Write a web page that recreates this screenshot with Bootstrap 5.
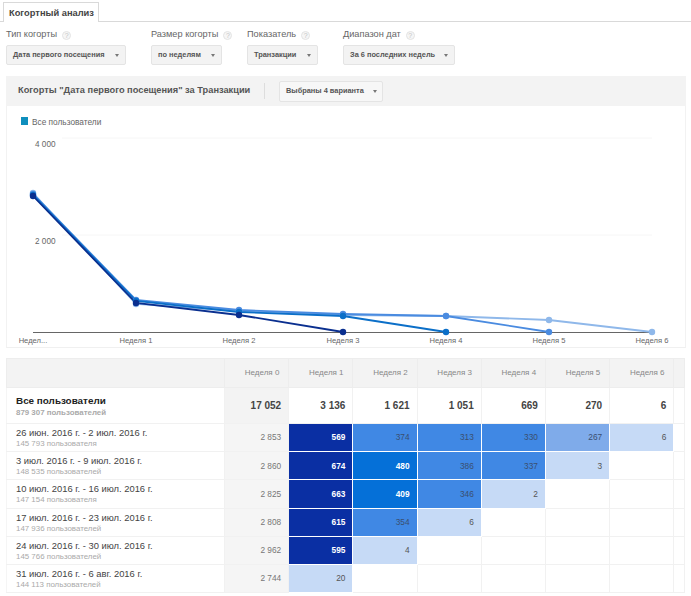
<!DOCTYPE html>
<html lang="ru">
<head>
<meta charset="utf-8">
<title>Когортный анализ</title>
<link rel="stylesheet" href="https://cdn.jsdelivr.net/npm/bootstrap@5.3.0/dist/css/bootstrap.min.css">
<style>
html,body{background:#fff;}
body{font-family:"Liberation Sans",Arial,sans-serif;color:#333;overflow:hidden;width:691px;height:596px;}
.tabbar{padding:2px 0 0 3px;height:22px;border-bottom:1px solid #d9d9d9;}
.tabitem{display:block;height:20px;width:96px;padding:3px 0 0 5px;border:1px solid #d9d9d9;border-bottom:0;background:#fff;font-size:9.3px;font-weight:700;color:#444;margin-bottom:-1px;line-height:14px;white-space:nowrap;}
.filters{padding:6px 0 0 6px;height:54px;}
.fgroup{width:145px;}
.fgroup.fg2,.fgroup.fg3{width:96px;}
.flabel{font-size:9.2px;color:#666;line-height:12px;height:17px;white-space:nowrap;}
.qmark{display:inline-block;width:9px;height:9px;border:1px solid #e4e4e4;border-radius:50%;background:#f6f6f6;color:#c4c4c4;font-size:7px;line-height:8px;text-align:center;margin-left:5px;vertical-align:-1px;}
.gbtn{display:flex;align-items:center;justify-content:space-between;height:20px;padding:0 6px;background:#f3f3f3;border:1px solid #e4e4e4;border-radius:2px;font-size:7.4px;font-weight:700;color:#555;white-space:nowrap;--bs-btn-hover-bg:#f3f3f3;}
.gbtn::after{border-top:3px solid #777;border-right:2.5px solid transparent;border-left:2.5px solid transparent;border-bottom:0;margin-left:0;}
.w120{width:120px;}.w71{width:71px;}.w112{width:112px;}
.panelhead{margin:0 5px 0 6px;height:30px;background:#f3f3f3;padding-left:12px;}
.ptitle{font-size:9.25px;font-weight:700;color:#555;width:246px;white-space:nowrap;}
.psep{width:1px;height:16px;background:#ddd;margin-right:14px;}
.gbtn.w104{width:104px;background:#f7f7f7;height:21px;padding:0 5px 0 6px;}
.chartbox{margin:0 5px 0 6px;height:242px;border-left:1px solid #f2f2f2;border-right:1px solid #f2f2f2;border-bottom:1px solid #f0f0f0;}
.chartbox svg{display:block;}
.ctext{font-family:"Liberation Sans",Arial,sans-serif;font-size:7.6px;fill:#666;}
.cohort{table-layout:fixed;border-collapse:collapse;width:678px;margin:10px 0 0 6px;--bs-table-bg:transparent;}
.cohort td,.cohort th{padding:0 5px 0 0;text-align:right;vertical-align:middle;border:1px solid #f1f1f1;font-weight:400;line-height:1;}
.cohort thead th{height:29px;background:#f3f3f3;color:#888;font-size:8px;text-align:center;padding:0 0 0 11px;border-color:#ededed;white-space:nowrap;}
.cohort td.rname{text-align:left;padding:0 0 0 9px;border-left-color:#f5f5f5;}
.rmain{font-size:9.4px;color:#444;line-height:11px;white-space:nowrap;}
.rsub{font-size:7.9px;color:#aaa;line-height:9px;white-space:nowrap;margin-top:1px;}
.totrow td{height:36px;font-size:10px;font-weight:700;color:#444;padding-right:7px;}
.totrow .rmain{font-size:9.9px;font-weight:700;color:#222;line-height:12px;}
.bodyrow td{height:28.2px;font-size:8.3px;color:#777;padding-right:7px;}
.cohort td.zero{background:#f5f5f5;}
.totrow td.zero{background:#f3f3f3;}
.cohort td.h5{background:#0a2fa3;color:#fff;font-weight:700;border-color:#fff;}
.cohort td.h4{background:#0570d8;color:#fff;font-weight:700;border-color:#fff;}
.cohort td.h3{background:#4088e4;color:#3a4f70;border-color:#fff;}
.cohort td.h2{background:#7fabea;color:#3a4f70;border-color:#fff;}
.cohort td.h1{background:#c6daf6;color:#555;border-color:#fff;}
.c-label{width:218px;}.c-wk{width:64.2px;}.c-end{width:10.6px;}
</style>
</head>
<body>
<div class="tabbar"><span class="tabitem">Когортный анализ</span></div>
<div class="filters d-flex">
  <div class="fgroup"><div class="flabel">Тип когорты<span class="qmark">?</span></div><button class="btn gbtn dropdown-toggle w120" type="button">Дата первого посещения</button></div>
  <div class="fgroup fg2"><div class="flabel">Размер когорты<span class="qmark">?</span></div><button class="btn gbtn dropdown-toggle w71" type="button">по неделям</button></div>
  <div class="fgroup fg3"><div class="flabel">Показатель<span class="qmark">?</span></div><button class="btn gbtn dropdown-toggle w71" type="button">Транзакции</button></div>
  <div class="fgroup"><div class="flabel">Диапазон дат<span class="qmark">?</span></div><button class="btn gbtn dropdown-toggle w112" type="button">За 6 последних недель</button></div>
</div>
<div class="panelhead d-flex align-items-center">
  <div class="ptitle">Когорты "Дата первого посещения" за Транзакции</div>
  <div class="psep"></div>
  <button class="btn gbtn dropdown-toggle w104" type="button">Выбраны 4 варианта</button>
</div>
<div class="chartbox">
<svg width="678" height="241" viewBox="7 106 678 241" xmlns="http://www.w3.org/2000/svg">
  <rect x="21" y="117" width="7" height="8" fill="#0f8fbd"/>
  <text class="ctext" x="32" y="125" style="font-size:8.3px">Все пользователи</text>
  <line x1="62" x2="652" y1="138" y2="138" stroke="#f6f6f6"/>
  <line x1="62" x2="652" y1="235" y2="235" stroke="#f6f6f6"/>
  <text class="ctext" x="35" y="147" style="font-size:8.2px">4 000</text>
  <text class="ctext" x="35" y="244" style="font-size:8.2px">2 000</text>
  <line x1="33" x2="652" y1="332.5" y2="332.5" stroke="#666"/>
  <g fill="none" stroke-width="1.8">
    <polyline stroke="#8fb8ea" points="33,193 136,304 239,311 343,315 446,316 549,320 652,332"/>
    <polyline stroke="#4a8be0" points="33,194 136,300 239,310 343,314 446,316 549,332"/>
    <polyline stroke="#0b6fc8" points="33,195 136,301 239,312 343,316 446,332"/>
    <polyline stroke="#0a2f8f" points="33,196 136,303 239,315 343,332"/>
  </g>
  <g fill="#8fb8ea"><circle cx="33" cy="193" r="3.2"/><circle cx="136" cy="304" r="3.2"/><circle cx="239" cy="311" r="3.2"/><circle cx="343" cy="315" r="3.2"/><circle cx="446" cy="316" r="3.2"/><circle cx="549" cy="320" r="3.2"/><circle cx="652" cy="332" r="3.2"/></g>
  <g fill="#4a8be0"><circle cx="33" cy="194" r="3.2"/><circle cx="136" cy="300" r="3.2"/><circle cx="239" cy="310" r="3.2"/><circle cx="343" cy="314" r="3.2"/><circle cx="446" cy="316" r="3.2"/><circle cx="549" cy="332" r="3.2"/></g>
  <g fill="#0b6fc8"><circle cx="33" cy="195" r="3.2"/><circle cx="136" cy="301" r="3.2"/><circle cx="239" cy="312" r="3.2"/><circle cx="343" cy="316" r="3.2"/><circle cx="446" cy="332" r="3.2"/></g>
  <g fill="#0a2f8f"><circle cx="33" cy="196" r="3.2"/><circle cx="136" cy="303" r="3.2"/><circle cx="239" cy="315" r="3.2"/><circle cx="343" cy="332" r="3.2"/></g>
  <g text-anchor="middle">
    <text class="ctext" x="33" y="343">Недел...</text>
    <text class="ctext" x="136" y="343">Неделя 1</text>
    <text class="ctext" x="239" y="343">Неделя 2</text>
    <text class="ctext" x="343" y="343">Неделя 3</text>
    <text class="ctext" x="446" y="343">Неделя 4</text>
    <text class="ctext" x="549" y="343">Неделя 5</text>
    <text class="ctext" x="652" y="343">Неделя 6</text>
  </g>
</svg>
</div>
<table class="table cohort mb-0">
  <colgroup><col class="c-label"><col class="c-wk"><col class="c-wk"><col class="c-wk"><col class="c-wk"><col class="c-wk"><col class="c-wk"><col class="c-wk"><col class="c-end"></colgroup>
  <thead><tr><th></th><th>Неделя 0</th><th>Неделя 1</th><th>Неделя 2</th><th>Неделя 3</th><th>Неделя 4</th><th>Неделя 5</th><th>Неделя 6</th><th></th></tr></thead>
  <tbody>
    <tr class="totrow"><td class="rname"><div class="rmain">Все пользователи</div><div class="rsub">879 307 пользователей</div></td><td class="zero">17 052</td><td>3 136</td><td>1 621</td><td>1 051</td><td>669</td><td>270</td><td>6</td><td></td></tr>
    <tr class="bodyrow"><td class="rname"><div class="rmain">26 июн. 2016 г. - 2 июл. 2016 г.</div><div class="rsub">145 793 пользователя</div></td><td class="zero">2 853</td><td class="h5">569</td><td class="h3">374</td><td class="h3">313</td><td class="h3">330</td><td class="h2">267</td><td class="h1">6</td><td></td></tr>
    <tr class="bodyrow"><td class="rname"><div class="rmain">3 июл. 2016 г. - 9 июл. 2016 г.</div><div class="rsub">148 535 пользователей</div></td><td class="zero">2 860</td><td class="h5">674</td><td class="h4">480</td><td class="h3">386</td><td class="h3">337</td><td class="h1">3</td><td></td><td></td></tr>
    <tr class="bodyrow"><td class="rname"><div class="rmain">10 июл. 2016 г. - 16 июл. 2016 г.</div><div class="rsub">147 154 пользователя</div></td><td class="zero">2 825</td><td class="h5">663</td><td class="h4">409</td><td class="h3">346</td><td class="h1">2</td><td></td><td></td><td></td></tr>
    <tr class="bodyrow"><td class="rname"><div class="rmain">17 июл. 2016 г. - 23 июл. 2016 г.</div><div class="rsub">147 936 пользователей</div></td><td class="zero">2 808</td><td class="h5">615</td><td class="h3">354</td><td class="h1">6</td><td></td><td></td><td></td><td></td></tr>
    <tr class="bodyrow"><td class="rname"><div class="rmain">24 июл. 2016 г. - 30 июл. 2016 г.</div><div class="rsub">145 766 пользователей</div></td><td class="zero">2 962</td><td class="h5">595</td><td class="h1">4</td><td></td><td></td><td></td><td></td><td></td></tr>
    <tr class="bodyrow"><td class="rname"><div class="rmain">31 июл. 2016 г. - 6 авг. 2016 г.</div><div class="rsub">144 113 пользователей</div></td><td class="zero">2 744</td><td class="h1">20</td><td></td><td></td><td></td><td></td><td></td><td></td></tr>
  </tbody>
</table>
<script src="https://cdn.jsdelivr.net/npm/bootstrap@5.3.0/dist/js/bootstrap.bundle.min.js"></script>
</body>
</html>
